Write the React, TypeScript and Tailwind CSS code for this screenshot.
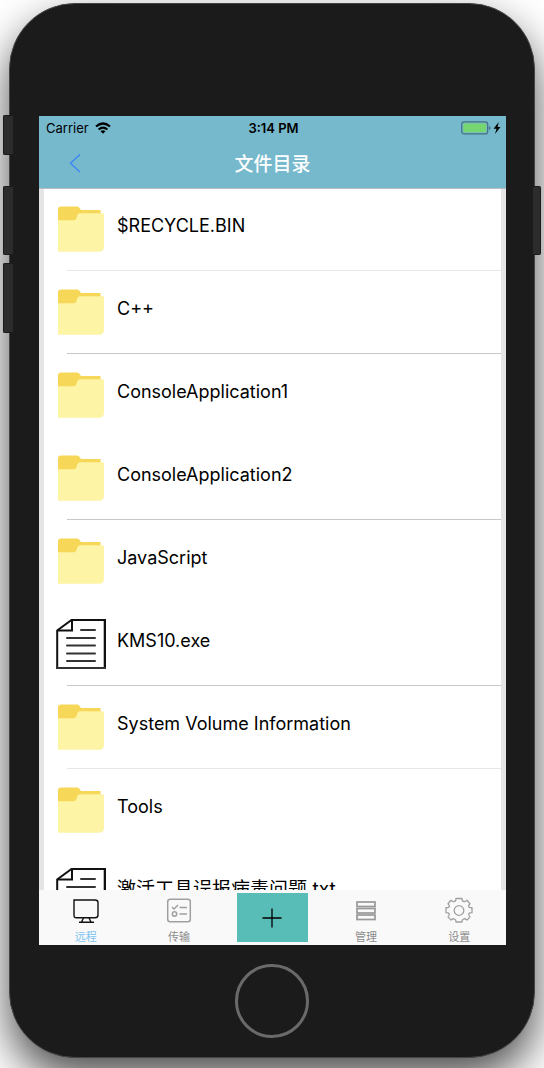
import React from "react";

type Kind = "folder" | "file";
type Entry = { name: string; kind: Kind; line: string; size: string };

const entries: Entry[] = [
  { name: "$RECYCLE.BIN", kind: "folder", line: "border-[#e6e6e6]", size: "text-lg" },
  { name: "C++", kind: "folder", line: "border-[#c8c7cc]", size: "text-lg" },
  { name: "ConsoleApplication1", kind: "folder", line: "border-transparent", size: "text-lg" },
  { name: "ConsoleApplication2", kind: "folder", line: "border-[#c8c7cc]", size: "text-lg" },
  { name: "JavaScript", kind: "folder", line: "border-transparent", size: "text-lg" },
  { name: "KMS10.exe", kind: "file", line: "border-[#c8c7cc]", size: "text-lg" },
  { name: "System Volume Information", kind: "folder", line: "border-[#e6e6e6]", size: "text-lg" },
  { name: "Tools", kind: "folder", line: "border-transparent", size: "text-lg" },
  { name: "激活工具误报病毒问题.txt", kind: "file", line: "border-transparent", size: "text-[19px]" },
];

function FolderIcon() {
  return (
    <svg viewBox="0 0 50 50" className="size-[50px]" aria-hidden="true">
      <path d="M2 18V5.500q0-3 3-3h16q1.500 0 2.300 1.200L25 6h19.500V20H2z" fill="#f6d757" />
      <path d="M2 16.300h15.500q2 0 2.600-1.600l1.400-3.600Q22.100 9.300 24 9.300h23q1 0 1 1V42.700q0 5-5 5H2z" fill="#fdf4a6" />
    </svg>
  );
}

function FileIcon() {
  return (
    <svg viewBox="0 0 50 50" className="size-[50px]" aria-hidden="true" fill="none" stroke="#111">
      <path d="M1.200 49V11.500L15.500 1H49" strokeWidth="2" />
      <path d="M49 0v50" strokeWidth="2.600" />
      <path d="M0 49h50" strokeWidth="2" stroke="#333" />
      <path d="M1.500 11.500H16V1" strokeWidth="2" />
      <path d="M25 11h14M11 19h28M11 26.500h28M11 34.500h28M11 42h28" strokeWidth="2" stroke="#333" strokeLinecap="round" />
    </svg>
  );
}

function MonitorIcon() {
  return (
    <svg viewBox="0 0 28 28" className="size-7" aria-hidden="true" fill="none" stroke="#111" strokeWidth="1.400">
      <path d="M2 3h21q3 0 3 2.500V18q0 2.800-3 2.800H4.500Q2 20.800 2 18z" />
      <path d="M11.500 21l-2 4M17 21l2 4M7 25.200h15" />
    </svg>
  );
}

function TransferIcon() {
  return (
    <svg viewBox="0 0 28 28" className="size-7" aria-hidden="true" fill="none" stroke="#a0a0a0" strokeWidth="1.500">
      <rect x="2.700" y="2.200" width="22.600" height="22.600" rx="2.500" />
      <path d="M7 10l2 2 4-4M14.500 10.500h7.500M14.500 17h7.500" />
      <circle cx="9.500" cy="17" r="2.200" />
    </svg>
  );
}

function ManageIcon() {
  return (
    <svg viewBox="0 0 28 28" className="size-7" aria-hidden="true" fill="none" stroke="#999" strokeWidth="1.700">
      <rect x="5" y="5" width="18" height="4.500" />
      <rect x="5" y="11.500" width="18" height="4.500" />
      <rect x="5" y="18" width="18" height="4.500" />
    </svg>
  );
}

function GearIcon() {
  return (
    <svg viewBox="0 0 28 28" className="size-7" aria-hidden="true" fill="none" stroke="#a0a0a0" strokeWidth="1.300" strokeLinejoin="round">
      <path d="M11 1.500h6q0 3 2 3.200 1 .2 3-1.400l3 3.400q-2 2-1.200 3.200.6 1 3.200.8v5q-2.600 0-3.200 1-.7 1.200 1.200 3.200l-3 3.200q-2-1.600-3-1.300-2 .3-2 3.200h-6q0-2.900-2-3.200-1-.3-3 1.300l-3-3.200q1.900-2 1.200-3.200-.6-1-3.200-1v-5q2.600.2 3.200-.8Q5 8.700 3 6.700l3-3.400q2 1.600 3 1.400 2-.2 2-3.200z" />
      <circle cx="14" cy="13.500" r="4.800" />
    </svg>
  );
}

const tabs = [
  { label: "远程", Icon: MonitorIcon, color: "text-[#7cc3f0]" },
  { label: "传输", Icon: TransferIcon, color: "text-[#8c8c8c]" },
  null,
  { label: "管理", Icon: ManageIcon, color: "text-[#8c8c8c]" },
  { label: "设置", Icon: GearIcon, color: "text-[#8c8c8c]" },
];

function StatusBar() {
  return (
    <div className="grid h-6 grid-cols-3 items-center pr-[5px] pl-[7px] text-[13px] leading-6 text-black">
      <div className="flex items-center gap-1.5">
        <span>Carrier</span>
        <svg viewBox="0 0 16 12" className="h-3 w-4" aria-hidden="true" fill="none" stroke="#000" strokeWidth="2.200">
          <path d="M1 4.500q7-6 14 0" />
          <path d="M3.600 7.500q4.400-3.700 8.800 0" />
          <path d="M8 11.800L5.500 9.300q2.500-2 5 0z" fill="#000" stroke="none" />
        </svg>
      </div>
      <span className="text-center font-semibold">3:14 PM</span>
      <div className="flex items-center justify-end gap-0.5">
        <svg viewBox="0 0 30 14" className="h-3.5 w-[30px]" aria-hidden="true">
          <rect x="0.700" y="0.900" width="26" height="12" rx="2.500" fill="none" stroke="#447080" strokeWidth="1.200" />
          <rect x="2.300" y="2.500" width="22.800" height="8.800" rx="0.800" fill="#76d672" />
          <path d="M28 5q1.500.5 1.500 2T28 9z" fill="#447080" />
        </svg>
        <svg viewBox="0 0 8 12" className="h-3 w-2" aria-hidden="true">
          <path d="M5.800 0L.5 6.800h3L2 12l5.500-7H4.600z" fill="#000" />
        </svg>
      </div>
    </div>
  );
}

export default function App() {
  return (
    <main className="flex h-screen flex-col overflow-hidden bg-white px-[9px] pt-[3px] pb-2.5 font-['Inter','Noto_Sans_CJK_SC',sans-serif]">
      <div className="relative flex min-h-0 flex-1 flex-col rounded-[66px] border border-[#444] bg-[#1b1b1b] pt-28 pr-7 pl-[29px] shadow-[0_20px_44px_rgba(0,0,0,0.7)]">
        <span className="absolute top-[111px] -left-[7px] h-10 w-2.5 rounded-l-xs border border-r-0 border-[#1b1b1b] bg-[#2c2c2c]" />
        <span className="absolute top-[182px] -left-[7px] h-[69px] w-2.5 rounded-l-xs border border-r-0 border-[#1b1b1b] bg-[#2c2c2c]" />
        <span className="absolute top-[259px] -left-[7px] h-[70px] w-2.5 rounded-l-xs border border-r-0 border-[#1b1b1b] bg-[#2c2c2c]" />
        <span className="absolute top-[182px] -right-[7px] h-[69px] w-2 rounded-r-xs border border-l-0 border-[#1b1b1b] bg-[#2c2c2c]" />

        <section className="flex min-h-0 flex-1 flex-col bg-[#e5e5e5]">
          <header className="relative bg-[#76b8cc] shadow-[0_1px_0_#b9bfc1]">
            <StatusBar />
            <div className="grid h-12 grid-cols-3 items-center">
              <button type="button" aria-label="返回" className="ml-[26px] flex size-6 items-center justify-center">
                <svg viewBox="0 0 24 24" className="size-6" aria-hidden="true" fill="none" stroke="#3a86f5" strokeWidth="1.300">
                  <path d="M15 2.500L5.500 11.300l9.500 8.700" />
                </svg>
              </button>
              <h1 className="pt-0.5 text-center text-[19px] leading-6 font-medium text-white">文件目录</h1>
            </div>
          </header>

          <ul className="mx-[5px] min-h-0 flex-1 overflow-hidden bg-white">
            {entries.map(({ name, kind, line, size }) => (
              <li key={name}>
                <a href="#" className={`flex h-[82px] items-center gap-[11px] pl-3 whitespace-nowrap text-black ${size}`}>
                  {kind === "folder" ? <FolderIcon /> : <FileIcon />}
                  <span className="pb-1.5 leading-6">{name}</span>
                </a>
                <div className={`ml-[23px] border-b ${line}`} />
              </li>
            ))}
          </ul>

          <nav className="grid h-[55px] grid-cols-5 bg-[#f9f9f9]">
            {tabs.map((tab) =>
              tab ? (
                <button key={tab.label} type="button" className={`flex flex-col items-center gap-1 pt-[7px] text-[11px] leading-4 ${tab.color}`}>
                  <tab.Icon />
                  <span>{tab.label}</span>
                </button>
              ) : (
                <button key="add" type="button" aria-label="添加" className="mt-[3px] flex h-[49px] w-[71px] items-center justify-center justify-self-center bg-[#58bdb6]">
                  <svg viewBox="0 0 20 20" className="size-5" aria-hidden="true" stroke="#000" strokeWidth="1.300">
                    <path d="M10 .5v19M.5 10h19" />
                  </svg>
                </button>
              ),
            )}
          </nav>
        </section>

        <footer className="flex h-28 shrink-0 justify-center pt-[19px] pr-0.5">
          <button type="button" aria-label="Home" className="size-[74px] rounded-full border-3 border-[#6a6a6a]" />
        </footer>
      </div>
    </main>
  );
}
